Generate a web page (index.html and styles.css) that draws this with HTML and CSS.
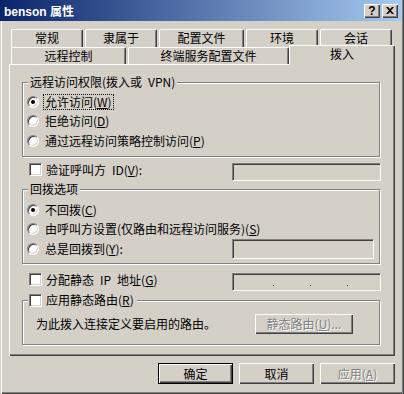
FILE: index.html
```html
<!DOCTYPE html>
<html lang="zh-CN">
<head>
    <meta charset="UTF-8">
    <title>benson 属性</title>
    <link rel="stylesheet" href="styles.css">
</head>
<body>

<div class="window">
    <div class="titlebar">
        <span class="title">benson 属性</span>
        <div class="caption-buttons">
            <span class="cap-btn help">?</span>
            <span class="cap-btn close">
                <svg width="8" height="7" viewBox="0 0 8 7"><path d="M0 0h2l2 2 2-2h2L5 3.5 8 7H6L4 5 2 7H0l3-3.5z" fill="#000"/></svg>
            </span>
        </div>
    </div>

    <div class="client">
        <div class="tabs">
            <div class="tab-row back">
                <div class="tab w72">常规</div>
                <div class="tab w72">隶属于</div>
                <div class="tab w85">配置文件</div>
                <div class="tab w72">环境</div>
                <div class="tab w72">会话</div>
            </div>
            <div class="tab-row front">
                <div class="tab w115">远程控制</div>
                <div class="tab w161">终端服务配置文件</div>
                <div class="tab selected">拨入</div>
            </div>
        </div>

        <div class="panel">
            <div class="group access">
                <div class="group-title">远程访问权限(拨入或&ensp;VPN)</div>
                <div class="options">
                    <div class="option"><span class="radio checked"></span><span class="label focus">允许访问(<u>W</u>)</span></div>
                    <div class="option"><span class="radio"></span><span class="label">拒绝访问(<u>D</u>)</span></div>
                    <div class="option"><span class="radio"></span><span class="label">通过远程访问策略控制访问(<u>P</u>)</span></div>
                </div>
            </div>

            <div class="check-row verify">
                <span class="check"></span>
                <span class="label">验证呼叫方&ensp;ID(<u>V</u>):</span>
                <div class="textbox"></div>
            </div>

            <div class="group callback">
                <div class="group-title">回拨选项</div>
                <div class="options">
                    <div class="option"><span class="radio checked"></span><span class="label">不回拨(<u>C</u>)</span></div>
                    <div class="option"><span class="radio"></span><span class="label">由呼叫方设置(仅路由和远程访问服务)(<u>S</u>)</span></div>
                    <div class="option"><span class="radio"></span><span class="label">总是回拨到(<u>Y</u>):</span><div class="textbox short"></div></div>
                </div>
            </div>

            <div class="check-row static-ip">
                <span class="check"></span>
                <span class="label">分配静态&ensp;IP&ensp;地址(<u>G</u>)</span>
                <div class="textbox ip">
                    <span class="ip-dot"></span>
                    <span class="ip-part"></span><span class="ip-dot"></span>
                    <span class="ip-part"></span><span class="ip-dot"></span>
                </div>
            </div>

            <div class="group routes">
                <div class="group-title check-title">
                    <span class="check"></span>
                    <span class="label">应用静态路由(<u>R</u>)</span>
                </div>
                <div class="route-row">
                    <span class="label">为此拨入连接定义要启用的路由。</span>
                    <button class="btn disabled route-btn">静态路由(<u>U</u>)...</button>
                </div>
            </div>
        </div>

        <div class="footer">
            <button class="btn default">确定</button>
            <button class="btn">取消</button>
            <button class="btn disabled">应用(<u>A</u>)</button>
        </div>
    </div>
</div>

</body>
</html>
```

FILE: styles.css
```css
* {
    box-sizing: border-box;
}
body {
    margin: 0;
    font-family: "Noto Sans CJK SC", sans-serif;
    font-size: 12px;
    line-height: 14px;
    color: #000;
    background: #d4d0c8;
}
u {
    text-decoration: underline;
    text-underline-offset: 1px;
}

/* window frame */
.window {
    width: 404px;
    height: 394px;
    background: #d4d0c8;
    box-shadow: inset -1px 0 #404040, inset -2px 0 #808080;
    overflow: hidden;
}
.titlebar {
    height: 21px;
    margin-right: 2px;
    padding: 0 4px;
    display: flex;
    align-items: center;
    justify-content: space-between;
    background: linear-gradient(to right, #0a246a, #a6caf0);
    color: #fff;
    font: bold 12px "Liberation Sans", "Noto Sans CJK SC", sans-serif;
}
.caption-buttons {
    display: flex;
    gap: 2px;
}
.cap-btn {
    width: 16px;
    height: 14px;
    display: flex;
    align-items: center;
    justify-content: center;
    background: #d4d0c8;
    color: #000;
    font: bold 12px "Liberation Sans", sans-serif;
    box-shadow: inset 1px 1px #fff, inset -1px -1px #404040, inset -2px -2px #808080;
}
.client {
    height: 373px;
    margin-right: 2px;
    padding-top: 8px;
    box-shadow: inset 1px 0 #d4d0c8, inset 2px 0 #fff, inset 0 -1px #404040, inset 0 -2px #808080;
}

/* tabs */
.tabs {
    padding-left: 11px;
}
.tab-row {
    display: flex;
    gap: 2px;
}
.tab-row.back {
    height: 18px;
}
.tab-row.front {
    height: 17px;
}
.tab {
    border-top: 1px solid #fff;
    border-left: 1px solid #fff;
    border-right: 1px solid #404040;
    border-radius: 2px 2px 0 0;
    box-shadow: inset -1px 0 #808080;
    text-align: center;
    line-height: 16px;
    background: #d4d0c8;
}
.w72 { width: 72px; }
.w85 { width: 85px; }
.w115 { width: 115px; }
.w161 { width: 161px; }
.tab.selected {
    position: relative;
    z-index: 1;
    width: 106px;
    height: 20px;
    margin: -2px 0 -1px -2px;
}

/* tab page */
.panel {
    margin-left: 9px;
    width: 386px;
    height: 292px;
    padding: 18px 14px 0 13px;
    box-shadow: inset 1px 1px #fff, inset -1px -1px #404040, inset -2px -2px #808080;
}
.group {
    width: 358px;
    border: 1px solid #808080;
    box-shadow: inset 1px 1px #fff, 1px 1px #fff;
}
.group.access {
    height: 75px;
}
.group.callback {
    height: 75px;
    margin-top: 8px;
}
.group.routes {
    height: 45px;
    margin-top: 9px;
}
.group-title {
    width: fit-content;
    margin: -8px 0 0 5px;
    padding: 0 2px;
    line-height: 14px;
    background: #d4d0c8;
}
.group-title.check-title {
    display: flex;
    align-items: center;
    gap: 4px;
    margin-left: 5px;
    padding: 0 3px 0 1px;
}
.options {
    padding: 3px 5px 0 4px;
}
.callback .options {
    padding-top: 4px;
}
.option {
    display: flex;
    align-items: center;
    height: 19.5px;
}
.label {
    white-space: nowrap;
}
.label.focus {
    outline: 1px dotted #000;
    outline-offset: 0;
    padding: 0 1px;
    margin-left: -1px;
}

.radio {
    flex: none;
    width: 12px;
    height: 12px;
    margin-right: 6px;
    border: 1px solid;
    border-color: #808080 #fff #fff #808080;
    border-radius: 50%;
    background: #fff;
    box-shadow: inset 1px 1px #404040, inset -1px -1px #d4d0c8;
    display: flex;
    align-items: center;
    justify-content: center;
}
.radio.checked::after {
    content: "";
    width: 4px;
    height: 4px;
    border-radius: 50%;
    background: #000;
}
.check {
    flex: none;
    width: 13px;
    height: 13px;
    border: 1px solid;
    border-color: #808080 #fff #fff #808080;
    background: #fff;
    box-shadow: inset 1px 1px #404040, inset -1px -1px #d4d0c8;
}

.check-row {
    display: flex;
    align-items: flex-start;
    gap: 4px;
    height: 18px;
    padding-left: 7px;
}
.check-row .label {
    line-height: 13px;
}
.check-row.verify {
    margin-top: 6px;
}
.check-row.static-ip {
    margin-top: 9px;
}
.textbox {
    margin-left: auto;
    width: 149px;
    height: 18px;
    border: 1px solid;
    border-color: #808080 #fff #fff #808080;
    box-shadow: inset 1px 1px #404040, inset -1px -1px #d4d0c8;
    background: #d4d0c8;
}
.textbox.short {
    width: 142px;
    height: 20px;
}
.textbox.ip {
    display: flex;
    align-items: flex-end;
    padding: 0 0 4px 40px;
}
.ip-part {
    width: 36px;
}
.ip-dot {
    width: 1px;
    height: 1px;
    background: #404040;
}

.route-row {
    display: flex;
    align-items: center;
    height: 20px;
    margin-top: 7px;
    padding: 0 26px 0 13px;
}

/* buttons */
.btn {
    font: inherit;
    line-height: 14px;
    padding: 0;
    border: none;
    background: #d4d0c8;
    color: #000;
    width: 75px;
    height: 21px;
    box-shadow: inset 1px 1px #fff, inset -1px -1px #404040, inset -2px -2px #808080;
}
.btn.default {
    box-shadow: inset 0 0 0 1px #000, inset 2px 2px #fff, inset -2px -2px #404040, inset -3px -3px #808080;
}
.btn.disabled {
    color: #808080;
    text-shadow: 1px 1px #fff;
}
.route-btn {
    margin-left: auto;
    width: 98px;
    height: 20px;
}
.footer {
    display: flex;
    justify-content: flex-end;
    gap: 6px;
    margin-top: 7px;
    padding-right: 7px;
}
```
